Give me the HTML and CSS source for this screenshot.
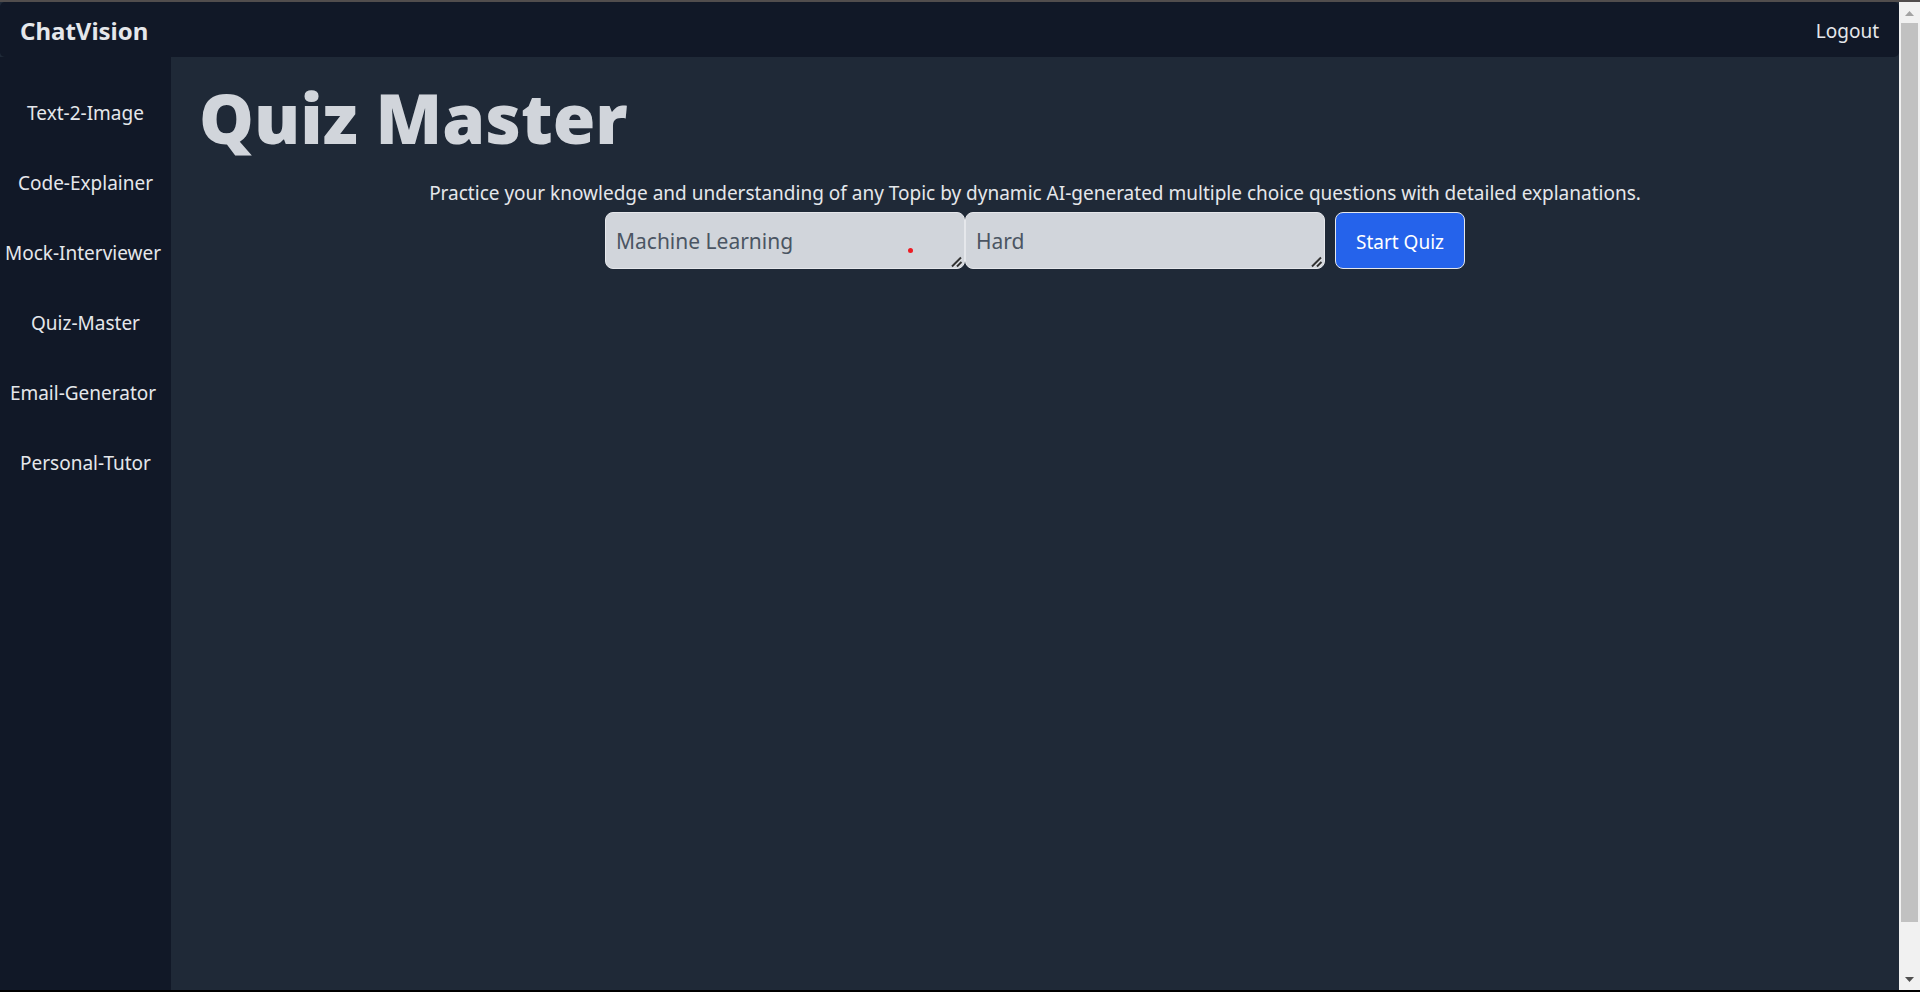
FILE: index.html
```html
<!DOCTYPE html>
<html lang="en">
<head>
<meta charset="utf-8">
<title>ChatVision</title>
<link rel="stylesheet" href="styles.css">
</head>
<body>
<div class="window">
  <div class="page">
    <header class="topbar">
      <a class="brand" href="#">ChatVision</a>
      <a class="logout" href="#">Logout</a>
    </header>
    <div class="body">
      <nav class="sidebar" aria-label="Tools">
        <a href="#">Text-2-Image</a>
        <a href="#">Code-Explainer</a>
        <a class="shifted" href="#">Mock-Interviewer</a>
        <a href="#">Quiz-Master</a>
        <a class="shifted" href="#">Email-Generator</a>
        <a href="#">Personal-Tutor</a>
      </nav>
      <main class="content">
        <h1>Quiz Master</h1>
        <p>Practice your knowledge and understanding of any Topic by dynamic AI-generated multiple choice questions with detailed explanations.</p>
        <form class="quiz-form">
          <div class="field">
            <textarea rows="1" aria-label="Topic" placeholder="Machine Learning"></textarea>
            <span class="pointer-dot"></span>
            <svg class="grip" viewBox="0 0 12 12"><path class="light" d="M2 11.500L11 2.500M7 11.500L11 7.500"/><path class="dark" d="M1 10.500L10 1.500M6 10.500L10.500 6"/></svg>
          </div>
          <div class="field">
            <textarea rows="1" aria-label="Difficulty" placeholder="Hard"></textarea>
            <svg class="grip" viewBox="0 0 12 12"><path class="light" d="M2 11.500L11 2.500M7 11.500L11 7.500"/><path class="dark" d="M1 10.500L10 1.500M6 10.500L10.500 6"/></svg>
          </div>
          <button type="button">Start Quiz</button>
        </form>
      </main>
    </div>
  </div>
  <div class="scrollbar" aria-hidden="true">
    <svg class="arrow up" viewBox="0 0 21 21"><path d="M6 14h9L10.500 9z"/></svg>
    <div class="track"><div class="thumb"></div></div>
    <svg class="arrow down" viewBox="0 0 21 21"><path d="M6 8h9L10.500 13z"/></svg>
  </div>
</div>
</body>
</html>
```
FILE: styles.css
```css
* { box-sizing: border-box; }
body {
  margin: 0;
  background: #1f2937;
  color: #e5e7eb;
  font-family: "Segoe UI", "Noto Sans", sans-serif;
  font-size: 19px;
  line-height: 30px;
}
a { color: inherit; text-decoration: none; }
.window {
  display: flex;
  height: 100vh;
  border-top: 2px solid #514d4d;
  border-bottom: 2px solid #000;
}
.page { flex: 1; display: flex; flex-direction: column; min-width: 0; }
.topbar {
  display: flex;
  justify-content: space-between;
  align-items: center;
  padding: 14px 20px 11px;
  border-radius: 5px;
  background: #111827;
}
.brand { font-size: 24px; font-weight: 700; }
.body { flex: 1; display: flex; }
.sidebar {
  display: flex;
  flex-direction: column;
  gap: 40px;
  width: 171px;
  padding-top: 41px;
  background: #111827;
  text-align: center;
}
.sidebar .shifted { padding-right: 5px; }
.content { flex: 1; padding: 20px 0; text-align: center; }
h1 {
  margin: 0;
  padding: 0 28px;
  color: #d1d5db;
  font-size: 69px;
  font-weight: 900;
  line-height: 80px;
  text-align: left;
}
p { margin: 21px 0 4px; }
.quiz-form { display: flex; justify-content: center; }
.field { position: relative; display: flex; width: 360px; }
textarea {
  width: 100%;
  height: 57px;
  padding: 13px 10px 12px;
  border: 1px solid #e5e7eb;
  border-radius: 8px;
  background: #d1d5db;
  font: inherit;
  font-size: 21px;
  line-height: 30px;
  resize: vertical;
  overflow: hidden;
}
textarea::-webkit-resizer { background: transparent; }
textarea::placeholder { color: #4b5563; opacity: 1; }
.pointer-dot {
  position: absolute;
  right: 52px;
  bottom: 16px;
  width: 5px;
  height: 5px;
  border-radius: 50%;
  background: #ed1c24;
}
.grip {
  position: absolute;
  right: 2px;
  bottom: 1px;
  width: 12px;
  height: 12px;
  fill: none;
  pointer-events: none;
}
.grip .light { stroke: #f3f4f6; }
.grip .dark { stroke: #333; stroke-width: 2px; }
button {
  margin-left: 10px;
  padding: 2px 20px 0;
  border: 1px solid #e5e7eb;
  border-radius: 8px;
  background: #2563eb;
  color: #fff;
  font: inherit;
}
.scrollbar {
  display: flex;
  flex-direction: column;
  width: 21px;
  background: #f1f1f1;
}
.arrow { width: 21px; height: 21px; }
.up { fill: #a3a3a3; }
.down { fill: #505050; }
.track { flex: 1; padding: 0 2px; }
.thumb { height: 95%; background: #c1c1c1; }
```
